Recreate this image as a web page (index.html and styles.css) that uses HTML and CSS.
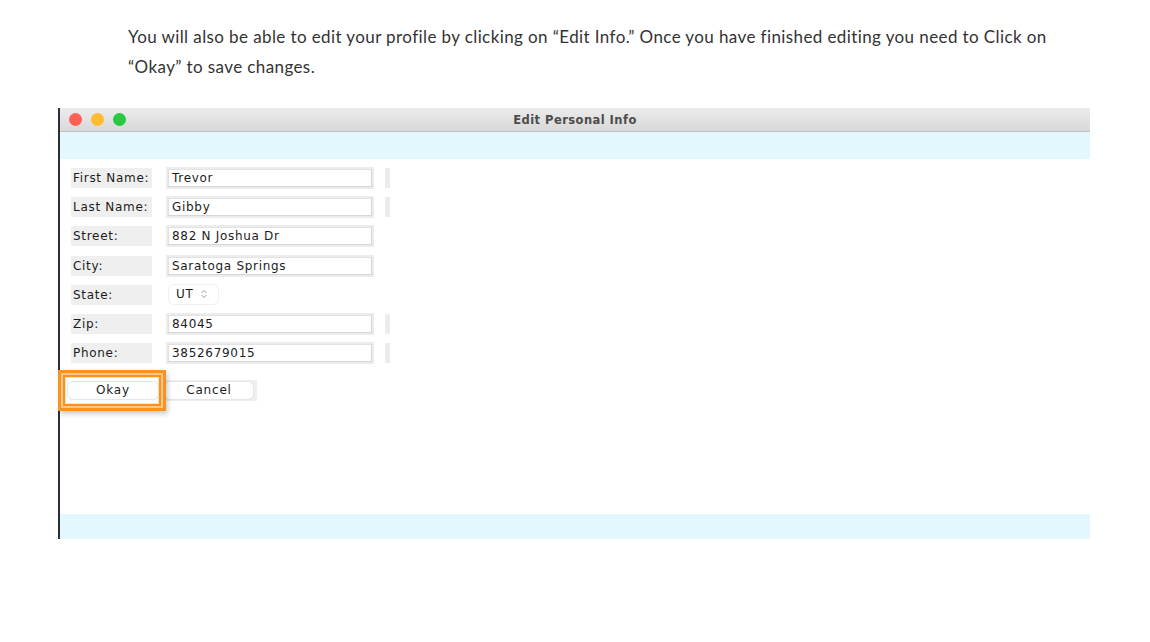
FILE: index.html
```
<!DOCTYPE html>
<html>
<head>
<meta charset="utf-8">
<link rel="stylesheet" href="styles.css">
</head>
<body>
<div class="page">
  <p class="intro">You will also be able to edit your profile by clicking on “Edit Info.” Once you have finished editing you need to Click on<br>“Okay” to save changes.</p>
  <div class="window">
    <div class="titlebar">
      <div class="lights">
        <span class="light red"></span>
        <span class="light yellow"></span>
        <span class="light green"></span>
      </div>
      <div class="title">Edit Personal Info</div>
    </div>
    <div class="band"></div>
    <div class="content">
      <div class="form">
        <div class="row"><span class="label">First Name:</span><span class="field">Trevor</span><span class="bar"></span></div>
        <div class="row"><span class="label">Last Name:</span><span class="field">Gibby</span><span class="bar"></span></div>
        <div class="row"><span class="label">Street:</span><span class="field">882 N Joshua Dr</span></div>
        <div class="row"><span class="label">City:</span><span class="field">Saratoga Springs</span></div>
        <div class="row"><span class="label">State:</span><span class="select">UT <svg class="arrows" width="8" height="10" viewBox="0 0 8 10"><path d="M1.5 4 L4 1.5 L6.5 4 M1.5 6 L4 8.5 L6.5 6" fill="none" stroke="#9a9a9a" stroke-width="1"/></svg></span></div>
        <div class="row"><span class="label">Zip:</span><span class="field">84045</span><span class="bar"></span></div>
        <div class="row"><span class="label">Phone:</span><span class="field">3852679015</span><span class="bar"></span></div>
        <div class="buttons">
          <span class="btn okay">Okay</span>
          <span class="btnwrap"><span class="btn">Cancel</span></span>
          <span class="highlight"><span class="highlight-inner"></span></span>
        </div>
      </div>
    </div>
    <div class="band bottom"></div>
  </div>
</div>
</body>
</html>
```
FILE: styles.css
```
html, body {
  margin: 0;
  padding: 0;
  background: #ffffff;
}
.page {
  width: 1150px;
  height: 642px;
  position: relative;
  overflow: hidden;
}
.intro {
  margin: 0;
  padding: 22px 0 0 128px;
  font-family: "Lato", "Open Sans", sans-serif;
  font-size: 17px;
  letter-spacing: 0.4px;
  line-height: 30px;
  color: #333333;
  white-space: nowrap;
}
.window {
  margin: 26px 0 0 58px;
  width: 1032px;
  border-left: 2px solid #2b2f3d;
  box-sizing: border-box;
  position: relative;
}
.window::before {
  content: "";
  position: absolute;
  right: 0;
  top: 0;
  width: 0;
  height: 0;
  border-top: 5px solid #1f2330;
  border-left: 5px solid transparent;
}
.titlebar {
  height: 23px;
  background: linear-gradient(#ececec, #d8d8d8);
  border-bottom: 1px solid #c2c2c2;
  display: flex;
  align-items: center;
  position: relative;
}
.lights {
  display: flex;
  gap: 9px;
  padding-left: 9px;
}
.light {
  width: 13px;
  height: 13px;
  border-radius: 50%;
  display: block;
}
.red { background: #fe5f57; }
.yellow { background: #febc2e; }
.green { background: #28c840; }
.title {
  position: absolute;
  left: 0;
  right: 0;
  text-align: center;
  font-family: "DejaVu Sans", sans-serif;
  font-weight: bold;
  font-size: 11.5px;
  color: #4c4c4c;
  letter-spacing: 0.45px;
}
.band {
  height: 27px;
  background: #e3f8fe;
}
.band.bottom {
  height: 25px;
}
.content {
  height: 355px;
  background: #ffffff;
}
.form {
  padding: 8px 0 0 11px;
  font-family: "DejaVu Sans", sans-serif;
  font-size: 12px;
  color: #1c1c1c;
  position: relative;
}
.row {
  height: 29px;
  display: flex;
  align-items: flex-start;
}
.row:nth-child(3), .row:nth-child(4), .row:nth-child(5) {
  margin-top: 0.3px;
}
.label {
  width: 81px;
  height: 20px;
  margin-top: 1px;
  box-sizing: border-box;
  padding-left: 2px;
  background: #efefef;
  line-height: 20px;
  letter-spacing: 0.7px;
  white-space: nowrap;
}
.field {
  margin-left: 14px;
  width: 208px;
  height: 22px;
  box-sizing: border-box;
  border: 2px solid #ececec;
  background: #ffffff;
  box-shadow: inset -1px -1px 0 #d6d6d6, inset 1px 1px 0 #e2e2e2;
  padding-left: 4px;
  line-height: 18px;
  letter-spacing: 0.7px;
  white-space: nowrap;
}
.bar {
  margin-left: 11px;
  margin-top: 1px;
  width: 5px;
  height: 20px;
  background: #ececec;
}
.select {
  margin-left: 17px;
  margin-top: 1px;
  width: 49px;
  height: 19px;
  box-sizing: border-box;
  border-radius: 5px;
  background: #ffffff;
  box-shadow: 0 0 0 1px #f0f0f0, 0 1px 1px rgba(0,0,0,0.06);
  padding-left: 7px;
  line-height: 19px;
  display: flex;
  align-items: center;
  gap: 6px;
  letter-spacing: 0.7px;
}
.buttons {
  display: flex;
  align-items: center;
  margin-top: 7px;
  height: 26px;
  position: relative;
}
.btn {
  display: block;
  width: 90px;
  height: 17px;
  box-sizing: border-box;
  background: #ffffff;
  border-radius: 5px;
  box-shadow: 0 0 0 1px #e6e6e6, 0 1px 1px rgba(0,0,0,0.12);
  text-align: center;
  line-height: 17px;
  letter-spacing: 0.8px;
}
.okay {
  margin-left: -3px;
}
.btnwrap {
  margin-left: 5px;
  padding: 2px 4px 2px 2px;
  background: #efefef;
}
.btnwrap .btn {
  width: 88px;
}
.highlight {
  position: absolute;
  left: -13px;
  top: -8px;
  width: 108px;
  height: 41px;
  box-sizing: border-box;
  border: 3px solid #f7931e;
  background: transparent;
  box-shadow: 2px 3px 5px rgba(0,0,0,0.2);
  padding: 2px;
}
.highlight-inner {
  display: block;
  width: 100%;
  height: 100%;
  box-sizing: border-box;
  border: 2px solid #f7931e;
  box-shadow: 0 0 0 2px #fcc68c, inset 0 0 0 1px #fde0bf;
}
```
